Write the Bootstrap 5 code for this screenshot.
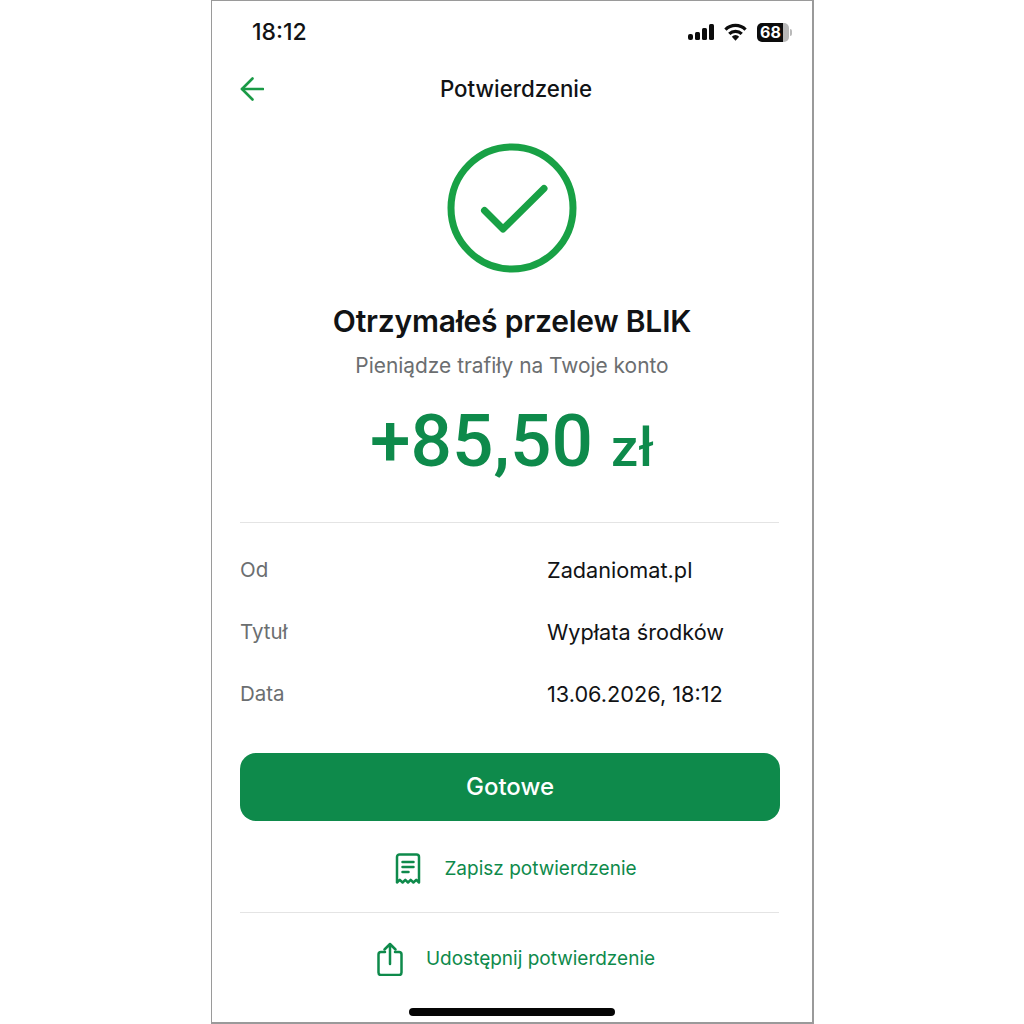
<!DOCTYPE html>
<html lang="pl">
<head>
    <meta charset="UTF-8">
    <meta name="viewport" content="width=device-width, initial-scale=1.0">
    <title>Potwierdzenie</title>
    <link rel="stylesheet" href="https://cdn.jsdelivr.net/npm/bootstrap@5.3.0/dist/css/bootstrap.min.css">
    <style>
        body {
            background: #fff;
            font-family: Inter, "Liberation Sans", sans-serif;
            color: #111315;
        }

        .phone {
            width: 603px;
            height: 1024px;
            margin-left: 211px;
            border: solid #9a9a9a;
            border-width: 1px 2px 2px 1px;
            overflow: hidden;
        }

        /* status bar */
        .status-bar {
            height: 62px;
            padding: 0 20px 0 40px;
        }

        .status-time {
            font-size: 23px;
            font-weight: 500;
            line-height: 62px;
        }

        .status-gap {
            margin-left: 10px;
        }

        .battery-num {
            width: 32px;
            height: 19px;
            border-radius: 5px;
            background: linear-gradient(90deg, #0c0c0c 82%, #b9b9b9 82%);
            color: #fff;
            font-size: 16px;
            font-weight: 700;
            line-height: 19px;
            padding-left: 3px;
        }

        .battery-tip {
            width: 2px;
            height: 7px;
            background: #b9b9b9;
            border-radius: 0 2px 2px 0;
            margin-left: 1px;
        }

        /* header */
        .top-bar {
            height: 52px;
            padding-left: 28px;
        }

        .top-title {
            font-size: 22.3px;
            font-weight: 500;
            left: 8px;
            right: 0;
            top: 10px;
            line-height: 32px;
        }

        .check-wrap {
            padding-top: 28px;
            line-height: 0;
        }

        .main-title {
            font-size: 30px;
            font-weight: 600;
            line-height: 40px;
            margin-top: 28px;
            letter-spacing: -0.2px;
        }

        .sub-title {
            font-size: 20.9px;
            color: #6b6e70;
            line-height: 30px;
            margin-top: 10px;
        }

        .amount {
            color: #0e8a4b;
            font-family: Roboto, "Liberation Sans", sans-serif;
            font-size: 73px;
            font-weight: 500;
            line-height: 84px;
            margin-top: 18px;
        }

        .amount-cur {
            font-size: 54px;
        }

        .hr-line {
            height: 1px;
            background: #e4e4e4;
            margin: 0 33px 0 28px;
        }

        .hr-line.first {
            margin-top: 32px;
        }

        .details {
            padding: 16px 28px 0;
        }

        .detail-row {
            height: 62px;
            font-size: 21.7px;
        }

        .detail-label {
            width: 307px;
            color: #6b6e70;
            font-size: 20.5px;
        }

        .done-btn {
            display: block;
            width: 540px;
            height: 68px;
            margin: 28px 0 0 28px;
            padding-left: 6px;
            background: #0e8a4b;
            border: 0;
            border-radius: 16px;
            color: #fff;
            font-size: 24px;
            font-weight: 500;
        }

        .action-row {
            color: #0e8a4b;
            font-size: 19px;
            height: 91px;
            padding-left: 8px;
            gap: 23px;
        }

        .action-row.save {
            padding-top: 5px;
        }

        .action-row.share {
            height: 95px;
            padding-bottom: 3px;
        }

        .home-bar {
            width: 206px;
            height: 8px;
            background: #050505;
            border-radius: 4px;
            margin: 0 auto;
        }
    </style>
</head>

<body>
    <div class="phone">
        <div class="status-bar d-flex align-items-center justify-content-between">
            <span class="status-time">18:12</span>
            <div class="d-flex align-items-center">
                <svg width="26" height="16" viewBox="0 0 26 16" fill="#0c0c0c">
                    <rect x="0" y="10" width="5" height="6" rx="2"/>
                    <rect x="7" y="8" width="5" height="8" rx="1.5"/>
                    <rect x="14" y="4" width="5" height="12" rx="1.5"/>
                    <rect x="21" y="0" width="5" height="16" rx="1.5"/>
                </svg>
                <svg class="status-gap" width="23" height="18" viewBox="0 0 24 18" fill="none" stroke="#0c0c0c" stroke-width="3.400">
                    <path d="M1.500 6.500a15 15 0 0 1 21 0"/>
                    <path d="M5.500 11a9.500 9.500 0 0 1 13 0"/>
                    <path d="M12 18l-3.800-4a5 5 0 0 1 7.600 0z" fill="#0c0c0c" stroke="none"/>
                </svg>
                <div class="battery-num status-gap">68</div>
                <div class="battery-tip"></div>
            </div>
        </div>

        <div class="top-bar position-relative d-flex align-items-center">
            <div class="top-title position-absolute text-center">Potwierdzenie</div>
            <svg width="24" height="24" viewBox="0 0 24 24" fill="none" stroke="#1a9a46" stroke-width="2.600" stroke-linecap="round" stroke-linejoin="round">
                <path d="M23 12H2"/>
                <path d="M12.500 1.500L2 12l10.500 10.500"/>
            </svg>
        </div>

        <div class="check-wrap text-center">
            <svg width="130" height="130" viewBox="0 0 130 130" fill="none" stroke="#18a145" stroke-linecap="round" stroke-linejoin="round">
                <circle cx="65" cy="65" r="61" stroke-width="7"/>
                <path d="M37.500 67.500L56 86L97 45.500" stroke-width="7"/>
            </svg>
        </div>

        <div class="main-title text-center">Otrzymałeś przelew BLIK</div>
        <div class="sub-title text-center">Pieniądze trafiły na Twoje konto</div>
        <div class="amount text-center">+85,50 <span class="amount-cur">zł</span></div>

        <div class="hr-line first"></div>

        <div class="details">
            <div class="detail-row d-flex align-items-center">
                <div class="detail-label">Od</div>
                <div>Zadaniomat.pl</div>
            </div>
            <div class="detail-row d-flex align-items-center">
                <div class="detail-label">Tytuł</div>
                <div>Wypłata środków</div>
            </div>
            <div class="detail-row d-flex align-items-center">
                <div class="detail-label">Data</div>
                <div>13.06.2026, 18:12</div>
            </div>
        </div>

        <button class="done-btn" type="button">Gotowe</button>

        <div class="action-row save d-flex align-items-center justify-content-center">
            <svg width="26" height="32" viewBox="0 0 26 32" fill="none" stroke="#0e8a4b" stroke-width="2.500" stroke-linecap="round" stroke-linejoin="round">
                <path d="M2 29.500V4a2.500 2.500 0 0 1 2.500-2.500h17A2.500 2.500 0 0 1 24 4v25.500l-2.800-2.600-2.800 2.600-2.700-2.600-2.700 2.600-2.700-2.600-2.700 2.600-2.800-2.600z"/>
                <path d="M7.500 9h11M7.500 14h11M7.500 19h6"/>
            </svg>
            <span>Zapisz potwierdzenie</span>
        </div>

        <div class="hr-line"></div>

        <div class="action-row share d-flex align-items-center justify-content-center">
            <svg width="26" height="34" viewBox="0 0 26 34" fill="none" stroke="#0e8a4b" stroke-width="2.500" stroke-linecap="round" stroke-linejoin="round">
                <path d="M8 10H4a2.500 2.500 0 0 0-2.500 2.500v18A2.500 2.500 0 0 0 4 33h18a2.500 2.500 0 0 0 2.500-2.500v-18A2.500 2.500 0 0 0 22 10h-4"/>
                <path d="M13 22V2M7.500 7.500L13 2l5.500 5.500"/>
            </svg>
            <span>Udostępnij potwierdzenie</span>
        </div>

        <div class="home-bar"></div>
    </div>

    <script src="https://cdn.jsdelivr.net/npm/bootstrap@5.3.0/dist/js/bootstrap.bundle.min.js"></script>
</body>
</html>
